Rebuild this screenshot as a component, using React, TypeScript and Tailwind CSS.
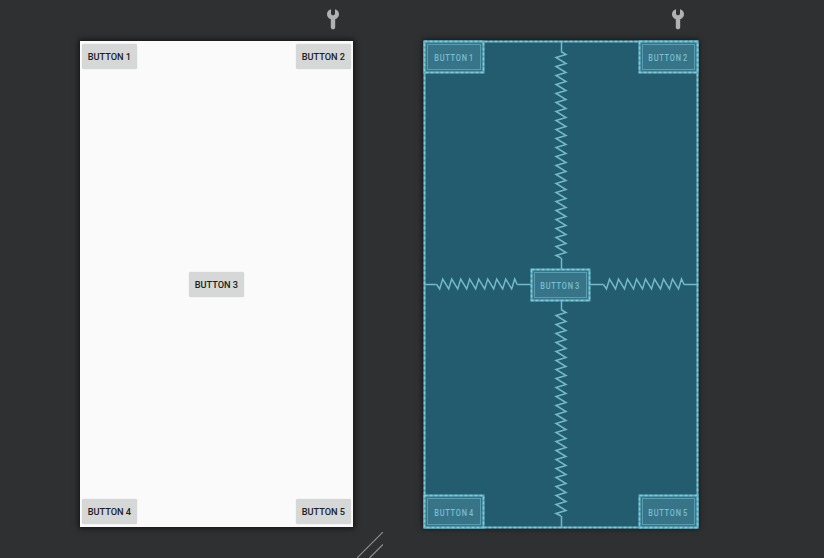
import React from "react";

const font = "font-['Roboto','Liberation_Sans',sans-serif]";

function Wrench() {
  return (
    <svg width="14" height="22" viewBox="0 0 14 22" className="block">
      <path
        d="M5 1.2V6.2L7 7.4L9 6.2V1.2C11.5 1.9 13 3.8 13 6.2C13 8.6 11.5 10.3 9.2 11.2V19.2C9.2 21.9 4.8 21.9 4.8 19.2V11.2C2.5 10.3 1 8.6 1 6.2C1 3.8 2.5 1.9 5 1.2Z"
        fill="#afb1b3"
      />
    </svg>
  );
}

function DesignButton({ label }: { label: string }) {
  return (
    <div className="flex h-[25px] w-[55px] items-center justify-center rounded-[2px] bg-[#d6d7d7] pt-px text-[9.5px] font-medium whitespace-nowrap text-[#202020] shadow-[0_0_1px_rgba(0,0,0,0.25)]">
      <span className="scale-x-[0.97]">{label}</span>
    </div>
  );
}

function Dashes({ fill }: { fill: string }) {
  return (
    <svg className="pointer-events-none absolute inset-0 h-full w-full overflow-visible">
      <rect x="0.5" y="0.5" width="100%" height="100%" fill={fill} stroke="#5ba8bc" strokeWidth="2" />
      <rect x="0.5" y="0.5" width="100%" height="100%" fill="none" stroke="#7fcadc" strokeWidth="1.6" strokeDasharray="3 2" />
    </svg>
  );
}

function BlueButton({ label, size }: { label: string; size: string }) {
  return (
    <div className={`relative pt-[3px] pr-[2px] pb-[2px] pl-[3px] ${size}`}>
      <Dashes fill="#387488" />
      <div className="relative flex h-full items-center justify-center border border-[#5a9db0] pt-[3px] text-[8.6px] font-medium tracking-[0.9px] whitespace-nowrap text-[#78bfd0] [word-spacing:-1.5px]">
        <span className="scale-x-[0.86]">{label}</span>
      </div>
    </div>
  );
}

function zigzag(horizontal: boolean, start: number, center: number, count: number) {
  const points: string[] = [];
  const add = (along: number, across: number) =>
    points.push(horizontal ? `${along},${center + across}` : `${center + across},${along}`);
  add(start, 0);
  for (let i = 0; i < count; i++) {
    add(start + 3 + i * 9, horizontal ? 4.5 : 5);
    add(start + 6 + i * 9, horizontal ? -5.5 : -5);
  }
  add(start + 8.5 + (count - 1) * 9, 0);
  return points.join(" ");
}

function Springs() {
  return (
    <svg
      className="absolute inset-0 overflow-visible"
      width="273"
      height="486"
      viewBox="424 41 273 486"
      fill="none"
      stroke="#72b9ca"
      strokeWidth="1.5"
    >
      <path d="M425 284.5H436.7M517.2 284.5H531M590 284.5H603.5M684 284.5H698M561.5 42V51.5M561.5 258V269M561.5 301V309.5M561.5 516V527" />
      <polyline points={zigzag(true, 436.7, 284.5, 9)} />
      <polyline points={zigzag(true, 603.5, 284.5, 9)} />
      <polyline points={zigzag(false, 51.5, 561, 23)} />
      <polyline points={zigzag(false, 309.5, 561, 23)} />
    </svg>
  );
}

export default function App() {
  return (
    <div className={`relative flex h-[558px] w-[824px] overflow-hidden bg-[#2f3032] pl-20 ${font}`}>
      <section className="w-[273px]">
        <div className="flex h-[41px] justify-end pt-2 pr-[13px]">
          <Wrench />
        </div>
        <div className="flex h-[486px] flex-col justify-between bg-[#fafafa] px-[2px] pt-[3.4px] pb-[3px] shadow-[0_0_5px_2px_rgba(0,0,0,0.5)]">
          <div className="flex justify-between">
            <DesignButton label="BUTTON 1" />
            <DesignButton label="BUTTON 2" />
          </div>
          <div className="flex justify-center">
            <DesignButton label="BUTTON 3" />
          </div>
          <div className="flex justify-between">
            <DesignButton label="BUTTON 4" />
            <DesignButton label="BUTTON 5" />
          </div>
        </div>
      </section>
      <section className="ml-[71px] w-[273px]">
        <div className="flex h-[41px] justify-end pt-2 pr-[12px]">
          <Wrench />
        </div>
        <div className="relative flex h-[486px] flex-col justify-between shadow-[0_0_5px_2px_rgba(0,0,0,0.5)]">
          <Dashes fill="#235c6f" />
          <Springs />
          <div className="flex justify-between">
            <BlueButton label="BUTTON 1" size="h-[31px] w-[59px]" />
            <BlueButton label="BUTTON 2" size="h-[31px] w-[58px]" />
          </div>
          <div className="flex justify-center pt-[2px] pr-px">
            <BlueButton label="BUTTON 3" size="h-[31px] w-[58px]" />
          </div>
          <div className="flex justify-between">
            <BlueButton label="BUTTON 4" size="h-[32px] w-[59px]" />
            <BlueButton label="BUTTON 5" size="h-[32px] w-[58px]" />
          </div>
        </div>
      </section>
      <svg className="absolute top-[532px] left-[357px]" width="26" height="26" fill="none" stroke="#929394" strokeWidth="1.1">
        <path d="M0 26L26 0M12.5 26L26 12.5" />
      </svg>
    </div>
  );
}
